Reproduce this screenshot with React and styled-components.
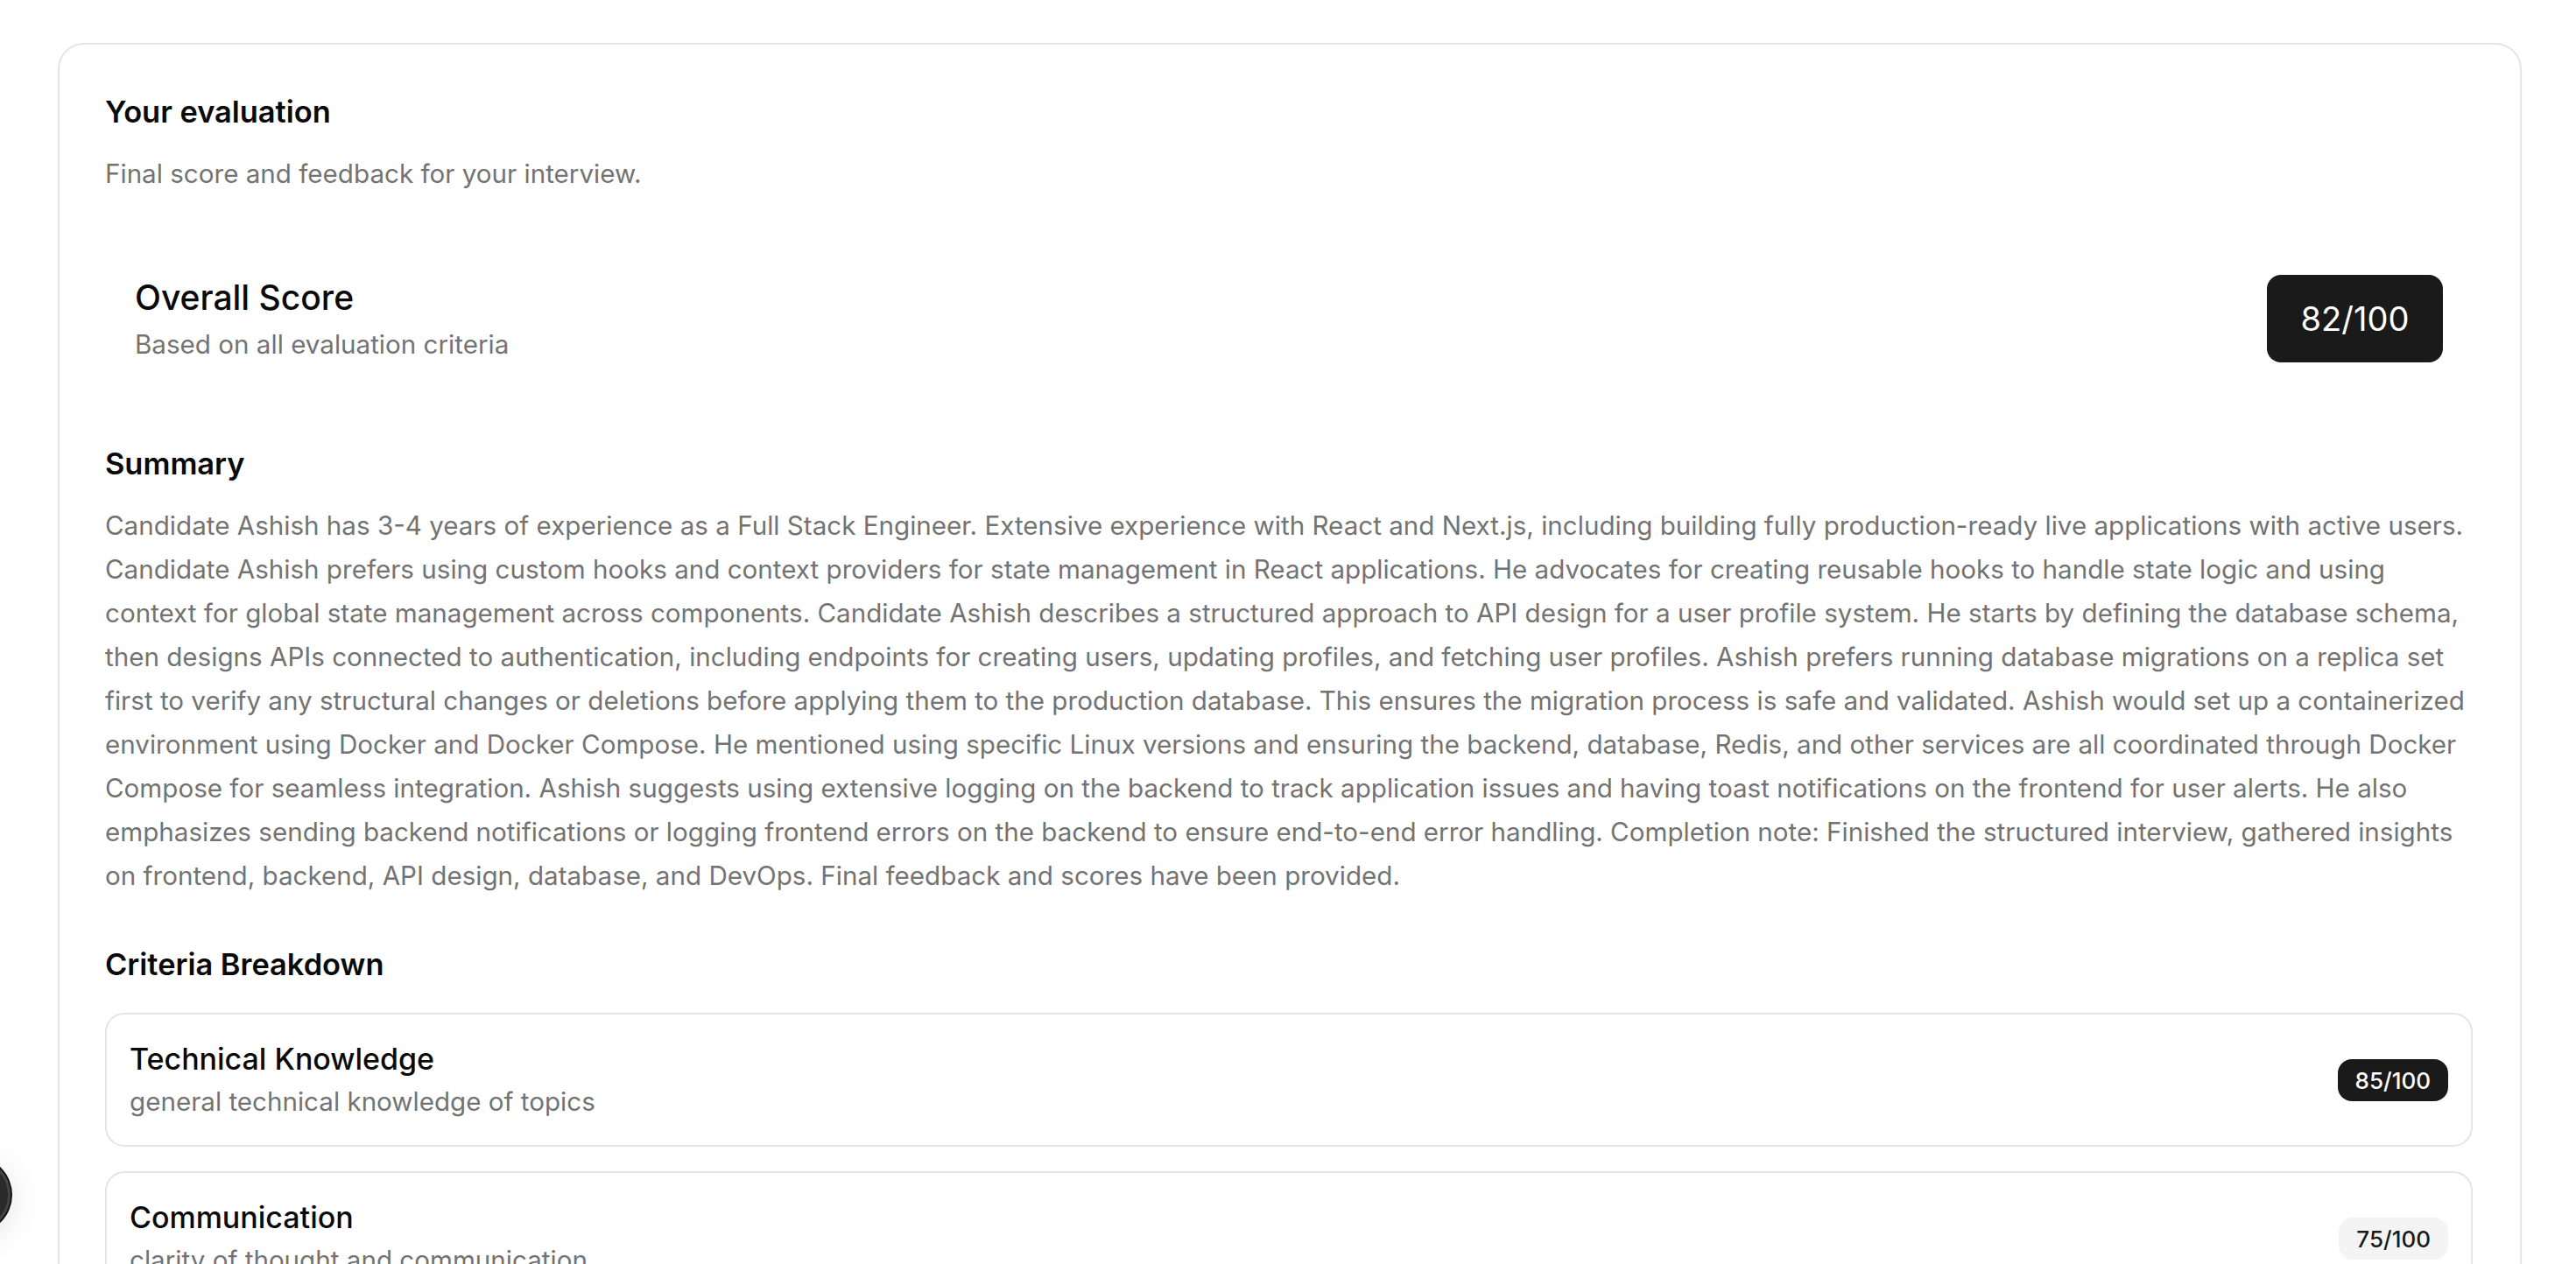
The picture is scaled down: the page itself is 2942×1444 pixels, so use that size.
import React from 'react';
import styled, {createGlobalStyle} from 'styled-components';

const summary = "Candidate Ashish has 3-4 years of experience as a Full Stack Engineer. Extensive experience with React and Next.js, including building fully production-ready live applications with active users. Candidate Ashish prefers using custom hooks and context providers for state management in React applications. He advocates for creating reusable hooks to handle state logic and using context for global state management across components. Candidate Ashish describes a structured approach to API design for a user profile system. He starts by defining the database schema, then designs APIs connected to authentication, including endpoints for creating users, updating profiles, and fetching user profiles. Ashish prefers running database migrations on a replica set first to verify any structural changes or deletions before applying them to the production database. This ensures the migration process is safe and validated. Ashish would set up a containerized environment using Docker and Docker Compose. He mentioned using specific Linux versions and ensuring the backend, database, Redis, and other services are all coordinated through Docker Compose for seamless integration. Ashish suggests using extensive logging on the backend to track application issues and having toast notifications on the frontend for user alerts. He also emphasizes sending backend notifications or logging frontend errors on the backend to ensure end-to-end error handling. Completion note: Finished the structured interview, gathered insights on frontend, backend, API design, database, and DevOps. Final feedback and scores have been provided.";

const criteria = [
  {
    title: "Technical Knowledge",
    description: "general technical knowledge of topics",
    score: 85,
  },
  {
    title: "Communication",
    description: "clarity of thought and communication",
    score: 75,
  },
];

const App = () => {
  return (
    <>
      <GlobalStyle/>
      <S.Page>
        <S.Card>
          <S.Header>
            <S.Title>Your evaluation</S.Title>
            <S.Subtitle>Final score and feedback for your interview.</S.Subtitle>
          </S.Header>

          <S.Overall>
            <div>
              <S.OverallTitle>Overall Score</S.OverallTitle>
              <S.Muted>Based on all evaluation criteria</S.Muted>
            </div>
            <S.BigBadge>82/100</S.BigBadge>
          </S.Overall>

          <S.Section>
            <S.SectionTitle>Summary</S.SectionTitle>
            <S.Paragraph>{summary}</S.Paragraph>
          </S.Section>

          <S.Section list>
            <S.SectionTitle>Criteria Breakdown</S.SectionTitle>
            <S.List>
              {criteria.map(c => (
                <S.Criterion key={c.title}>
                  <div>
                    <S.CriterionTitle>{c.title}</S.CriterionTitle>
                    <S.Muted>{c.description}</S.Muted>
                  </div>
                  <S.Badge dark={c.score >= 80}>{c.score}/100</S.Badge>
                </S.Criterion>
              ))}
            </S.List>
          </S.Section>
        </S.Card>
      </S.Page>
      <S.DevButton/>
    </>
  )
};

const GlobalStyle = createGlobalStyle`
  * { box-sizing: border-box; }
  body {
    margin: 0;
    background: #ffffff;
    font-family: Inter, "Noto Sans", sans-serif;
    color: #0a0a0a;
  }
`;

const S = {};

S.Page = styled.div`
  padding: 49px 62px 0 66px;
`;

S.Card = styled.div`
  border: 2px solid #e5e5e5;
  border-radius: 30px;
  background: #fff;
  box-shadow: 0 2px 4px rgba(0, 0, 0, 0.04);
  padding: 52px 54px 60px 52px;
  display: flex;
  flex-direction: column;
`;

S.Header = styled.div`
  display: flex;
  flex-direction: column;
  gap: 22px;
`;

S.Title = styled.div`
  font-size: 34.4px;
  line-height: 50px;
  font-weight: 600;
`;

S.Subtitle = styled.div`
  font-size: 29.6px;
  line-height: 46px;
  color: #737373;
`;

S.Overall = styled.div`
  margin-top: 56px;
  padding: 34px;
  display: flex;
  align-items: center;
  justify-content: space-between;
`;

S.OverallTitle = styled.div`
  font-size: 39px;
  line-height: 58px;
  font-weight: 500;
`;

S.Muted = styled.div`
  font-size: 29.6px;
  line-height: 48px;
  color: #737373;
`;

S.BigBadge = styled.div`
  width: 201px;
  height: 100px;
  border-radius: 16px;
  background: #1a1a1a;
  color: #fff;
  font-size: 38px;
  display: flex;
  align-items: center;
  justify-content: center;
`;

S.Section = styled.div`
  margin-top: ${p => p.list ? '52px' : '54px'};
  display: flex;
  flex-direction: column;
  gap: ${p => p.list ? '30px' : '20px'};
`;

S.SectionTitle = styled.div`
  font-size: 34.4px;
  line-height: 50px;
  font-weight: 600;
`;

S.Paragraph = styled.p`
  margin: 0;
  font-size: 29.6px;
  line-height: 50px;
  color: #737373;
`;

S.List = styled.div`
  display: flex;
  flex-direction: column;
  gap: 28px;
`;

S.Criterion = styled.div`
  border: 2px solid #e5e5e5;
  border-radius: 22px;
  padding: 27px 26px 26px 26px;
  display: flex;
  align-items: center;
  justify-content: space-between;
`;

S.CriterionTitle = styled.div`
  font-size: 34px;
  line-height: 48px;
  font-weight: 500;
`;

S.Badge = styled.div`
  height: 48px;
  padding: 0 20px;
  border-radius: 16px;
  display: flex;
  align-items: center;
  font-size: 26px;
  font-weight: 500;
  background: ${p => p.dark ? '#1a1a1a' : '#f4f4f4'};
  color: ${p => p.dark ? '#ffffff' : '#1a1a1a'};
`;

S.DevButton = styled.div`
  position: fixed;
  left: -72px;
  top: 1323px;
  width: 84px;
  height: 84px;
  border-radius: 50%;
  background: #2a2a2a;
  border: 3px solid #444;
  box-shadow: 0 0 0 2px #111, 0 6px 40px rgba(0, 0, 0, 0.12);
`;

export default App;
